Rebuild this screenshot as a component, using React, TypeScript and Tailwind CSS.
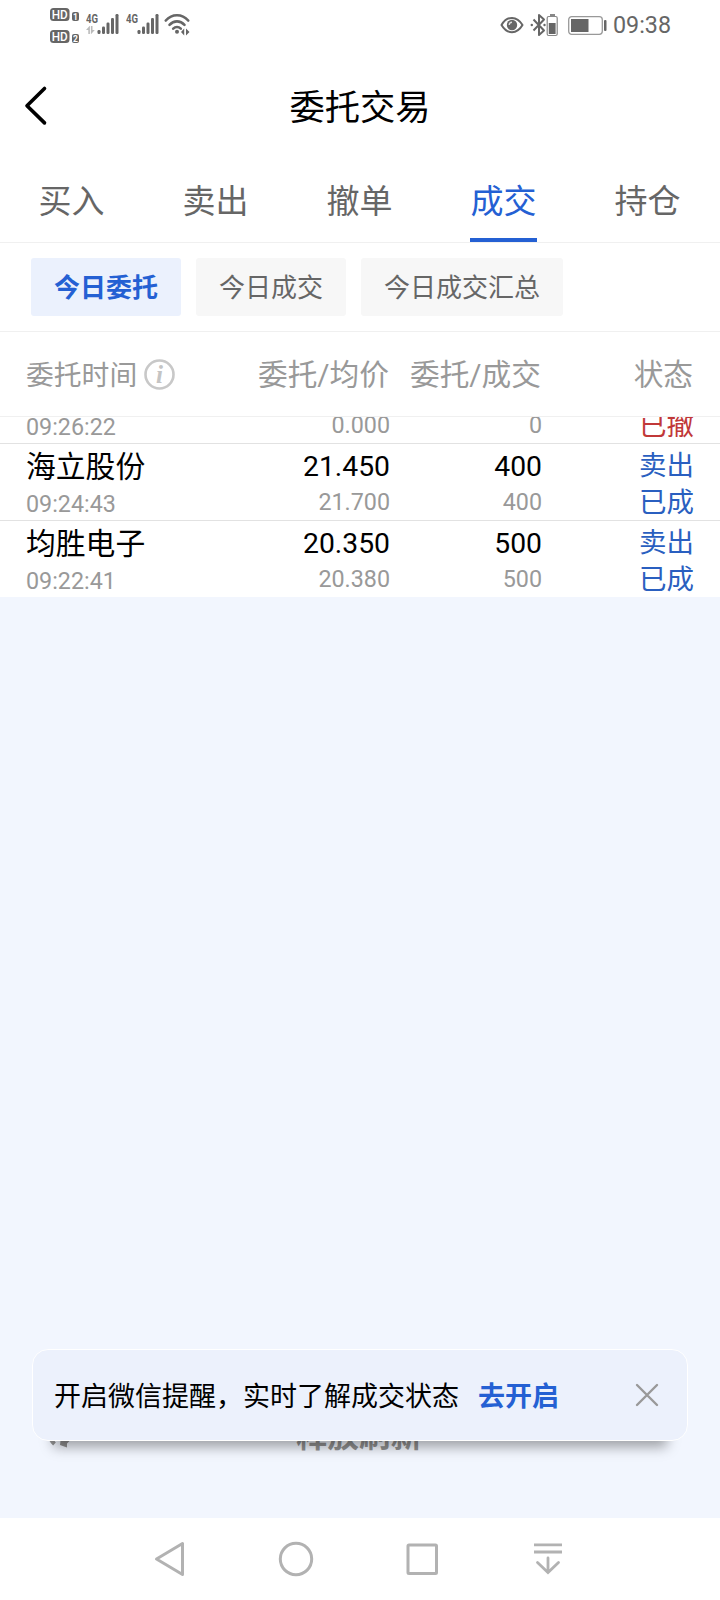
import { useState } from 'react';
import clsx from 'clsx';

interface Order {
  id: string;
  name?: string;
  time: string;
  price?: string;
  avgPrice: string;
  amount?: string;
  dealt: string;
  side?: string;
  status: string;
  cancelled?: boolean;
}

const tabs = ['买入', '卖出', '撤单', '成交', '持仓'];

const filters = ['今日委托', '今日成交', '今日成交汇总'];

const orders: Order[] = [
  {
    id: '1',
    time: '09:26:22',
    avgPrice: '0.000',
    dealt: '0',
    status: '已撤',
    cancelled: true,
  },
  {
    id: '2',
    name: '海立股份',
    time: '09:24:43',
    price: '21.450',
    avgPrice: '21.700',
    amount: '400',
    dealt: '400',
    side: '卖出',
    status: '已成',
  },
  {
    id: '3',
    name: '均胜电子',
    time: '09:22:41',
    price: '20.350',
    avgPrice: '20.380',
    amount: '500',
    dealt: '500',
    side: '卖出',
    status: '已成',
  },
];

function SignalIcon({ data }: { data?: boolean }) {
  return (
    <svg width="34" height="24" viewBox="0 0 34 24" fill="#666">
      <text x="0" y="11" fontSize="13" fontWeight="700" textLength="12" lengthAdjust="spacingAndGlyphs">
        4G
      </text>
      {data && (
        <path d="M3.500 14L0 18h2.300v4h1.600v-8zM5.200 22l3.600-4H6.500v-4H4.900v8z" fill="#bbb" />
      )}
      <rect x="11.500" y="18" width="3" height="4" rx="1.200" />
      <rect x="16" y="14.500" width="3" height="7.500" rx="1.200" />
      <rect x="20.500" y="10.500" width="3" height="11.500" rx="1.200" />
      <rect x="25" y="6" width="3" height="16" rx="1.200" />
      <rect x="29.500" y="2" width="3" height="20" rx="1.200" />
    </svg>
  );
}

function HdBadge({ slot }: { slot: string }) {
  return (
    <svg width="30" height="13" viewBox="0 0 30 13">
      <rect x="0" y="0" width="19.500" height="13" rx="3.500" fill="#666" />
      <text x="1.700" y="11" fontSize="12.500" fontWeight="500" fill="#fff" textLength="16" lengthAdjust="spacingAndGlyphs">
        HD
      </text>
      <rect x="22" y="4" width="7" height="9" rx="2" fill="#666" />
      <text x="25.500" y="11.600" fontSize="8.500" fontWeight="700" fill="#fff" textAnchor="middle">
        {slot}
      </text>
    </svg>
  );
}

function StatusBar() {
  return (
    <div className="flex h-[50px] items-start justify-between pl-[50px] pr-[49px]">
      <div className="flex items-start">
        <div className="flex flex-col gap-[9px] pt-2">
          <HdBadge slot="1" />
          <HdBadge slot="2" />
        </div>
        <div className="ml-[6px] flex gap-[6px] pt-3">
          <SignalIcon data />
          <SignalIcon />
        </div>
        <svg className="ml-[4px] mt-[13px]" width="26" height="23" viewBox="0 0 26 23" fill="none" stroke="#666" strokeWidth="2.600" strokeLinecap="round">
          <path d="M1.800 7.500C8 .4 18 .4 24.200 7.500" />
          <path d="M5.500 11.800c4.300-4.600 10.700-4.600 15 0" />
          <path d="M9.200 15.600c2.200-2 5.400-2 7.600 0" />
          <circle cx="13" cy="18.800" r="2" fill="#666" stroke="none" />
          <path d="M17 19l3.200-3.400v7zM25.500 19l-3.500-3.400v7z" fill="#666" stroke="none" />
        </svg>
      </div>

      <div className="flex items-center pt-[10px]">
        <svg width="24" height="18" viewBox="0 0 24 18" fill="none">
          <path d="M1.500 9C7 -.5 17 -.5 22.500 9 17 18.500 7 18.500 1.500 9z" stroke="#666" strokeWidth="2" strokeLinejoin="round" />
          <circle cx="12" cy="9" r="5.200" fill="#666" />
          <path d="M12 6.200A2.800 2.800 0 0 0 9.200 9" stroke="#ddd" strokeWidth="1.400" />
        </svg>
        <svg className="ml-[6px]" width="28" height="24" viewBox="0 0 28 24" fill="none">
          <path d="M3.500 6.500l10.500 11-5 4.500v-20l5 4.500-10.500 11" stroke="#666" strokeWidth="2" strokeLinejoin="round" />
          <circle cx="1.800" cy="12" r="1.200" fill="#666" />
          <circle cx="14.500" cy="12" r="1.200" fill="#666" />
          <rect x="20" y="1" width="5" height="2.200" fill="#888" />
          <rect x="17.200" y="3.500" width="10" height="19" rx="1.500" stroke="#888" strokeWidth="1.200" />
          <rect x="18.800" y="10" width="6.800" height="11" fill="#666" />
        </svg>
        <svg className="ml-[10px]" width="39" height="19" viewBox="0 0 39 19" fill="none">
          <rect x=".7" y=".7" width="33.600" height="17.600" rx="3" stroke="#999" strokeWidth="1.300" />
          <rect x="3" y="3" width="17.500" height="13" fill="#666" />
          <rect x="36" y="4" width="2.500" height="11" rx="1" fill="#666" />
        </svg>
        <span className="ml-[6px] text-[23.3px] leading-[30px] text-[#666]">09:38</span>
      </div>
    </div>
  );
}

function OrderRow({ order }: { order: Order }) {
  const statusColor = order.cancelled ? 'text-[#c13838]' : 'text-[#2a5fc0]';

  return (
    <div className="grid h-[77px] shrink-0 grid-cols-[200px_164px_152px_152px] border-b border-[#e2e2e2] pl-[26px]">
      <div className="pt-[4px]">
        <div className="h-[37px] text-[29.8px] leading-[37px] text-black">{order.name}</div>
        <div className="text-[23.3px] leading-[38px] text-[#999]">{order.time}</div>
      </div>
      <div className="pt-[4px] text-right">
        <div className="h-[38px] text-[28.3px] leading-[38px] text-black">{order.price}</div>
        <div className="text-[23.3px] leading-[33px] text-[#999]">{order.avgPrice}</div>
      </div>
      <div className="pt-[4px] text-right">
        <div className="h-[38px] text-[28.3px] leading-[38px] text-black">{order.amount}</div>
        <div className="text-[23.3px] leading-[33px] text-[#999]">{order.dealt}</div>
      </div>
      <div className={clsx('pt-[3px] text-right text-[27.5px] leading-[37px]', statusColor)}>
        <div className="h-[37px]">{order.side}</div>
        <div>{order.status}</div>
      </div>
    </div>
  );
}

function NavBar() {
  return (
    <div className="flex h-[82px] items-center bg-white pl-[107px]">
      {/* back */}
      <div className="flex w-[126px] justify-center">
        <svg width="36" height="40" viewBox="0 0 36 40" fill="none" stroke="#b2b2b2" strokeWidth="3" strokeLinejoin="round">
          <path d="M4.500 20L30.500 4.500v31z" />
        </svg>
      </div>
      {/* home */}
      <div className="flex w-[126px] justify-center">
        <svg width="40" height="40" viewBox="0 0 40 40" fill="none" stroke="#b2b2b2" strokeWidth="3">
          <circle cx="20" cy="20" r="15.700" />
        </svg>
      </div>
      {/* recents */}
      <div className="flex w-[126px] justify-center">
        <svg width="40" height="40" viewBox="0 0 40 40" fill="none" stroke="#b2b2b2" strokeWidth="3">
          <rect x="6" y="6" width="28.500" height="28.500" rx="1" />
        </svg>
      </div>
      {/* pull down */}
      <div className="flex w-[126px] justify-center">
        <svg width="40" height="40" viewBox="0 0 40 40" fill="none" stroke="#b2b2b2" strokeWidth="2.800">
          <path d="M6 5.800h28M6 13h28" />
          <path d="M20 19v14M9.500 23.500L20 33.500l10.500-10" strokeLinecap="round" />
        </svg>
      </div>
    </div>
  );
}

export default function App() {
  const [activeTab, setActiveTab] = useState('成交');
  const [activeFilter, setActiveFilter] = useState('今日委托');
  const [showNotice, setShowNotice] = useState(true);

  return (
    <div className="relative flex h-[1600px] w-[720px] flex-col overflow-hidden bg-[#f2f6fe] font-[Roboto,'Noto_Sans_CJK_SC',sans-serif]">
      <div className="bg-white">
        <StatusBar />

        {/* Header */}
        <div className="grid h-[112px] grid-cols-[100px_1fr_100px] items-center">
          <button className="pl-[23px]">
            <svg width="26" height="42" viewBox="0 0 26 42" fill="none" stroke="#000" strokeWidth="3.600" strokeLinecap="round" strokeLinejoin="round">
              <path d="M21.500 3.500L4 20.700l17.500 17.200" />
            </svg>
          </button>
          <h1 className="pt-[4px] text-center text-[35.3px] leading-[50px] text-black">委托交易</h1>
        </div>

        {/* Tabs */}
        <div className="grid h-[81px] grid-cols-5 border-b border-[#f0f0f0]">
          {tabs.map((tab) => (
            <button
              key={tab}
              onClick={() => setActiveTab(tab)}
              className={clsx(
                'ml-[38px] h-[80px] w-[67px] whitespace-nowrap border-b-4 pt-[3px] text-[33px] leading-[73px]',
                activeTab === tab
                  ? 'border-[#2460d3] text-[#2460d3]'
                  : 'border-transparent text-[#666]'
              )}
            >
              {tab}
            </button>
          ))}
        </div>

        {/* Filters */}
        <div className="flex h-[89px] gap-[15px] border-b border-[#f0f0f0] pl-[31px] pt-[15px]">
          {filters.map((filter) => (
            <button
              key={filter}
              onClick={() => setActiveFilter(filter)}
              className={clsx(
                'h-[58px] rounded-[3px] px-[23px] pt-[2px] text-[26px] leading-[56px]',
                activeFilter === filter
                  ? 'bg-[#ebf1fd] font-bold text-[#2460d3]'
                  : 'bg-[#f7f7f7] text-[#666]'
              )}
            >
              {filter}
            </button>
          ))}
        </div>

        {/* Column titles */}
        <div className="grid h-[85px] grid-cols-[200px_163px_152px_152px] items-center border-b border-[#f0f0f0] pl-[26px] text-[29.7px] leading-[40px] text-[#999]">
          <div className="flex items-center gap-[7px] whitespace-nowrap text-[27.8px]">
            <span className="pt-[4px] leading-[36px]">委托时间</span>
            <svg width="31" height="31" viewBox="0 0 31 31" fill="none">
              <circle cx="15.500" cy="15.500" r="14" stroke="#c8c8c8" strokeWidth="2.600" />
              <text x="15.500" y="24" fontSize="25" fontStyle="italic" fontWeight="700" fontFamily="Liberation Serif, serif" fill="#c4c4c4" textAnchor="middle">
                i
              </text>
            </svg>
          </div>
          <div className="pt-[2px] text-right">委托/均价</div>
          <div className="pt-[2px] text-right">委托/成交</div>
          <div className="pt-[2px] text-right">状态</div>
        </div>

        {/* Order list, scrolled past the top of the first row */}
        <div className="flex h-[180px] flex-col justify-end overflow-hidden">
          <div className="-mb-px">
            {orders.map((order) => (
              <OrderRow key={order.id} order={order} />
            ))}
          </div>
        </div>
      </div>

      {/* Pull to refresh */}
      <div className="flex flex-1 items-end pb-[59px]">
        <div className="flex w-full items-center">
          <svg className="ml-[47px]" width="28" height="44" viewBox="0 0 28 44" fill="none">
            <path d="M5 8C1 14 1 23 7.500 29" stroke="#909090" strokeWidth="4" />
            <path d="M14 21l-1 9 7 2.500v-4l5-5-2-6z" fill="#909090" />
          </svg>
          <span className="ml-[221px] text-[31.5px] font-bold leading-[44px] text-[#909090]">释放刷新</span>
        </div>
      </div>

      <NavBar />

      {showNotice && (
        <div className="absolute left-[32px] top-[1349px] flex h-[92px] w-[656px] items-center rounded-[16px] border border-white bg-[#ecf1fc] pl-[21px] shadow-[0_27px_12px_-21px_rgba(0,0,0,0.35)]">
          <span className="pt-[3px] text-[27px] leading-[40px] text-black">开启微信提醒，实时了解成交状态</span>
          <button className="ml-[19px] pt-[3px] text-[27px] font-bold leading-[40px] text-[#2460d3]">去开启</button>
          <button className="ml-[75px]" onClick={() => setShowNotice(false)}>
            <svg width="26" height="26" viewBox="0 0 26 26" fill="none" stroke="#999" strokeWidth="2.400" strokeLinecap="round">
              <path d="M3 3l20 20M23 3L3 23" />
            </svg>
          </button>
        </div>
      )}
    </div>
  );
}
